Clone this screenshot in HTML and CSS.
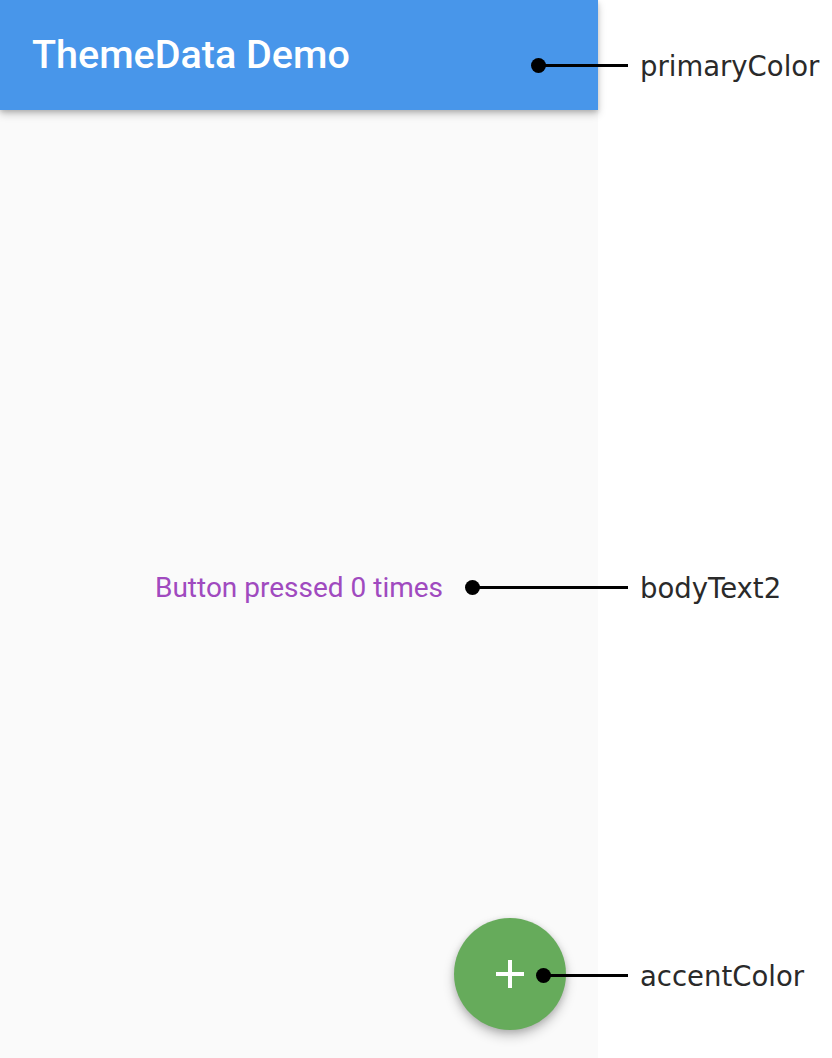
FILE: index.html
```html
<!DOCTYPE html>
<html>
<head>
<meta charset="utf-8">
<link rel="stylesheet" href="styles.css">
</head>
<body>
<div class="page">
  <div class="phone">
    <header class="appbar">
      <h1 class="title">ThemeData Demo</h1>
    </header>
    <main class="content">
      <p class="counter">Button pressed 0 times</p>
    </main>
    <button class="fab" aria-label="add">
      <svg width="28" height="28" viewBox="0 0 28 28"><path d="M14 0V28M0 14H28" stroke="#fff" stroke-width="4" fill="none"/></svg>
    </button>
  </div>
  <div class="note note-primary"><span class="pin"></span><span class="label">primaryColor</span></div>
  <div class="note note-body"><span class="pin"></span><span class="label">bodyText2</span></div>
  <div class="note note-accent"><span class="pin"></span><span class="label">accentColor</span></div>
</div>
</body>
</html>
```

FILE: styles.css
```css
html, body {
  margin: 0;
  padding: 0;
  background: #ffffff;
}
.page {
  position: relative;
  width: 832px;
  height: 1058px;
  overflow: hidden;
}
.phone {
  position: relative;
  width: 598px;
  height: 1058px;
  background: #fafafa;
  display: flex;
  flex-direction: column;
}
.appbar {
  height: 110px;
  flex: none;
  background: #4896ea;
  display: flex;
  align-items: center;
  padding-left: 32px;
  box-shadow: 0 4px 8px rgba(0,0,0,0.22), 0 2px 4px rgba(0,0,0,0.12);
  position: relative;
  z-index: 1;
}
.title {
  margin: 0;
  font-family: Roboto, "Liberation Sans", sans-serif;
  font-weight: 500;
  font-size: 39.5px;
  color: #ffffff;
  letter-spacing: 0;
  padding-bottom: 2px;
}
.content {
  flex: 1;
  display: flex;
  align-items: center;
  justify-content: center;
}
.counter {
  margin: 0;
  font-family: Roboto, "Liberation Sans", sans-serif;
  font-size: 28px;
  color: #a04abf;
  padding-top: 6px;
}
.fab {
  position: absolute;
  right: 32px;
  bottom: 28px;
  width: 112px;
  height: 112px;
  border-radius: 50%;
  border: none;
  padding: 0;
  background: #66ab5b;
  display: flex;
  align-items: center;
  justify-content: center;
  box-shadow: 0 6px 12px rgba(0,0,0,0.22), 0 2px 6px rgba(0,0,0,0.14);
}
.note {
  position: absolute;
  height: 40px;
  display: flex;
  align-items: center;
  z-index: 2;
}
.pin {
  position: relative;
  height: 3px;
  background: #000;
  margin-right: 12px;
}
.pin::before {
  content: "";
  position: absolute;
  left: -7px;
  top: -6px;
  width: 15px;
  height: 15px;
  border-radius: 50%;
  background: #000;
}
.label {
  font-family: "DejaVu Sans", Verdana, sans-serif;
  font-size: 27.5px;
  line-height: 40px;
  color: #2a2a2a;
  padding-top: 2px;
}
.note-primary { left: 538px; top: 45px; }
.note-primary .pin { width: 90px; }
.note-body { left: 472px; top: 567px; }
.note-body .pin { width: 156px; }
.note-accent { left: 543px; top: 955px; }
.note-accent .pin { width: 85px; }
```
